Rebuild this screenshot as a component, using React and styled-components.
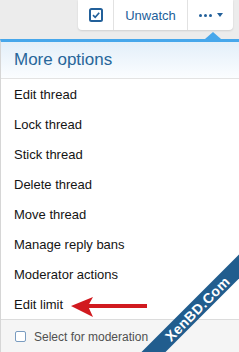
import React from 'react';
import styled, { createGlobalStyle } from 'styled-components';

const GlobalStyle = createGlobalStyle`
  html, body {
    margin: 0;
    padding: 0;
    width: 239px;
    height: 352px;
    overflow: hidden;
    background: #ffffff;
    font-family: "Liberation Sans", Arial, sans-serif;
  }
`;

const Page = styled.div`
  position: relative;
  width: 239px;
  height: 352px;
  overflow: hidden;
  display: flex;
  flex-direction: column;
`;

const TopBar = styled.div`
  height: 39px;
  flex-shrink: 0;
  display: flex;
  justify-content: flex-end;
  align-items: flex-start;
  padding-right: 6px;
  background: #ececec;
`;

const ButtonGroup = styled.div`
  display: flex;
  height: 30px;
  background: #fff;
  border-radius: 0 0 4px 4px;
  box-shadow: 0 1px 2px rgba(0, 0, 0, 0.12);
`;

const GroupButton = styled.div`
  width: ${(p) => p.w}px;
  display: flex;
  align-items: center;
  justify-content: center;
  gap: 5px;
  color: #22609a;
  font-size: 13px;
  border-left: ${(p) => (p.first ? 'none' : '1px solid #e2e2e2')};
`;

const Dots = styled.span`
  display: flex;
  gap: 2px;
  & > i {
    width: 3px;
    height: 3px;
    border-radius: 50%;
    background: #22609a;
  }
`;

const Caret = styled.span`
  width: 0;
  height: 0;
  border-left: 3.5px solid transparent;
  border-right: 3.5px solid transparent;
  border-top: 4px solid #22609a;
`;

const Menu = styled.div`
  position: relative;
  flex: 1;
  border-top: 3px solid #47a7eb;
  border-left: 1px solid #d6d6d6;
  background: #fff;
  display: flex;
  flex-direction: column;
`;

const MenuArrow = styled.span`
  position: absolute;
  top: -10px;
  left: 204px;
  width: 0;
  height: 0;
  border-left: 8px solid transparent;
  border-right: 8px solid transparent;
  border-bottom: 7px solid #47a7eb;
`;

const MenuHeader = styled.div`
  height: 36px;
  display: flex;
  align-items: center;
  padding-left: 13px;
  font-size: 17px;
  color: #27669a;
  background: linear-gradient(to bottom, #e3eff9, #fbfdff);
  border-bottom: 1px solid #e3e3e3;
`;

const MenuList = styled.div`
  display: flex;
  flex-direction: column;
`;

const MenuItem = styled.div`
  height: 30px;
  display: flex;
  align-items: center;
  padding-left: 13px;
  font-size: 13px;
  color: #141414;
`;

const MenuFooter = styled.div`
  flex: 1;
  display: flex;
  align-items: flex-start;
  gap: 8px;
  padding: 10px 0 0 14px;
  background: #f5f5f5;
  border-top: 1px solid #dcdcdc;
  font-size: 12px;
  color: #505050;
`;

const Box = styled.span`
  width: 9px;
  height: 9px;
  border: 1px solid #7a9cc0;
  border-radius: 2px;
  background: #fff;
  margin-top: 1px;
`;

const Pointer = styled.svg`
  position: absolute;
  left: 68px;
  top: 294px;
`;

const Watermark = styled.div`
  position: absolute;
  left: 82px;
  top: 300px;
  width: 230px;
  height: 17px;
  background: #215d8e;
  transform: rotate(-45deg);
  display: flex;
  align-items: center;
  justify-content: center;
  color: #fff;
  font-weight: bold;
  font-size: 14px;
  letter-spacing: 0.4px;
`;

const items = [
  'Edit thread',
  'Lock thread',
  'Stick thread',
  'Delete thread',
  'Move thread',
  'Manage reply bans',
  'Moderator actions',
  'Edit limit',
];

export default function App() {
  return (
    <Page>
      <GlobalStyle />
      <TopBar>
        <ButtonGroup>
          <GroupButton w={35} first>
            <svg width="14" height="14" viewBox="0 0 14 14">
              <rect x="1" y="1" width="12" height="12" rx="1.5" fill="none" stroke="#22609a" strokeWidth="2" />
              <path d="M4 7.2 L6.2 9.3 L10.2 4.8" fill="none" stroke="#22609a" strokeWidth="1.7" />
            </svg>
          </GroupButton>
          <GroupButton w={73}>Unwatch</GroupButton>
          <GroupButton w={45}>
            <Dots>
              <i />
              <i />
              <i />
            </Dots>
            <Caret />
          </GroupButton>
        </ButtonGroup>
      </TopBar>
      <Menu>
        <MenuArrow />
        <MenuHeader>More options</MenuHeader>
        <MenuList>
          {items.map((t) => (
            <MenuItem key={t}>{t}</MenuItem>
          ))}
        </MenuList>
        <MenuFooter>
          <Box />
          Select for moderation
        </MenuFooter>
      </Menu>
      <Pointer width="82" height="26" viewBox="0 0 82 26">
        <path d="M3 12 L25 3 L20 12 L25 23 Z" fill="#d11a1f" />
        <rect x="20" y="10" width="59" height="4" fill="#d11a1f" />
      </Pointer>
      <Watermark>XenBD.Com</Watermark>
    </Page>
  );
}
